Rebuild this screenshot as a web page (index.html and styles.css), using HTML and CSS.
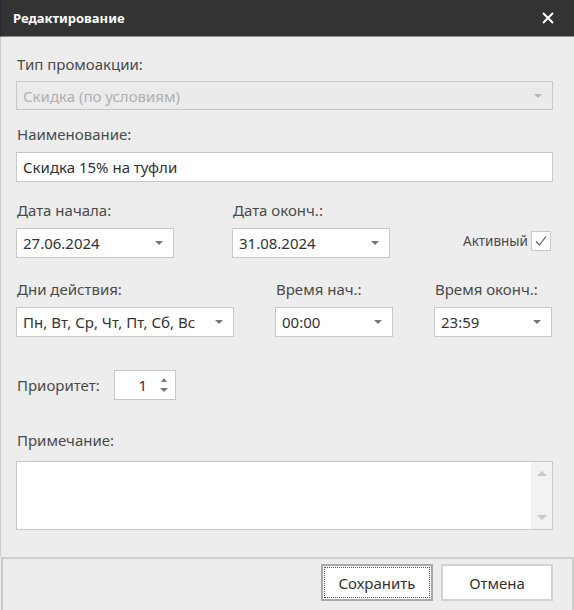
FILE: index.html
```html
<!DOCTYPE html>
<html lang="ru">
<head>
<meta charset="utf-8">
<title>Редактирование</title>
<link rel="stylesheet" href="styles.css">
</head>
<body>
<div class="window">
  <div class="titlebar">
    <span class="title">Редактирование</span>
    <svg class="close" width="12" height="12" viewBox="0 0 12 12"><path d="M1 1L11 11M11 1L1 11" stroke="#fff" stroke-width="2" fill="none"/></svg>
  </div>
  <div class="content">
    <div class="label first">Тип промоакции:</div>
    <div class="field select disabled full"><span class="val">Скидка (по условиям)</span><span class="arrow light"></span></div>

    <div class="label l2">Наименование:</div>
    <div class="field full"><span class="val">Скидка 15% на туфли</span></div>

    <div class="row r3">
      <div class="col w158">
        <div class="label">Дата начала:</div>
        <div class="field select"><span class="val">27.06.2024</span><span class="arrow"></span></div>
      </div>
      <div class="col w158">
        <div class="label">Дата оконч.:</div>
        <div class="field select"><span class="val">31.08.2024</span><span class="arrow"></span></div>
      </div>
      <div class="active">
        <span class="active-label">Активный</span>
        <span class="checkbox"><svg width="14" height="14" viewBox="0 0 14 14"><path d="M2 7.5L5.5 11L12 2.5" stroke="#555" stroke-width="1.1" fill="none"/></svg></span>
      </div>
    </div>

    <div class="row r4">
      <div class="col w218">
        <div class="label">Дни действия:</div>
        <div class="field select"><span class="val">Пн, Вт, Ср, Чт, Пт, Сб, Вс</span><span class="arrow"></span></div>
      </div>
      <div class="col w118">
        <div class="label">Время нач.:</div>
        <div class="field select"><span class="val">00:00</span><span class="arrow"></span></div>
      </div>
      <div class="col w118">
        <div class="label">Время оконч.:</div>
        <div class="field select"><span class="val">23:59</span><span class="arrow"></span></div>
      </div>
    </div>

    <div class="priority">
      <span class="plabel">Приоритет:</span>
      <div class="spin">
        <span class="num">1</span>
        <span class="spin-btns"><span class="up"></span><span class="down"></span></span>
      </div>
    </div>

    <div class="label l5">Примечание:</div>
    <div class="memo">
      <div class="memo-text"></div>
      <div class="scrollbar"><span class="sup"></span><span class="sdown"></span></div>
    </div>
  </div>
  <div class="footer">
    <button class="btn save"><span class="focus">Сохранить</span></button>
    <button class="btn cancel">Отмена</button>
  </div>
</div>
</body>
</html>
```
FILE: styles.css
```css
html, body {
  margin: 0;
  padding: 0;
  background: #ededed;
}
body {
  font-family: "Noto Sans", "Open Sans", sans-serif;
  font-size: 15px;
  color: #4a4a4a;
}
.window {
  width: 574px;
  height: 610px;
  display: flex;
  flex-direction: column;
  background: #ededed;
  overflow: hidden;
}
.titlebar {
  height: 36px;
  background: #333333;
  border-bottom: 1px solid #8a8a8a;
  border-left: 1px solid #2a2838;
  display: flex;
  align-items: center;
  padding: 0 20px 0 12px;
  flex: none;
}
.title {
  color: #fff;
  font-weight: bold;
  font-size: 13px;
  flex: 1;
}
.close {
  display: block;
}
.content {
  flex: 1;
  border-left: 1px solid #cfcfcf;
  padding: 0 21px 0 15px;
}
.label {
  line-height: 20px;
  height: 20px;
  margin-bottom: 8px;
  padding-left: 1px;
  color: #4a4a4a;
}
.label.first { margin-top: 17px; margin-bottom: 7px; }
.label.l2 { margin-top: 14px; }
.field {
  box-sizing: border-box;
  height: 30px;
  background: #fff;
  border: 1px solid #c8c8c8;
  display: flex;
  align-items: center;
  padding: 0 10px 0 6px;
  color: #333;
  position: relative;
}
.field.disabled {
  background: #ebebeb;
  color: #b0b0b0;
  height: 29px;
}
.val {
  flex: 1;
  white-space: nowrap;
}
.arrow {
  width: 0;
  height: 0;
  border-left: 4px solid transparent;
  border-right: 4px solid transparent;
  border-top: 4px solid #777;
}
.arrow.light { border-top-color: #b5b5b5; }
.row {
  display: flex;
}
.r3 { margin-top: 18px; }
.r4 { margin-top: 21px; gap: 41px; }
.w158 { width: 158px; }
.w158 + .w158 { margin-left: 58px; }
.w218 { width: 218px; }
.w118 { width: 118px; }
.active {
  margin-left: auto;
  margin-right: 2px;
  margin-top: 31px;
  display: flex;
  align-items: center;
  height: 20px;
  gap: 3px;
  font-size: 13.5px;
  color: #4a4a4a;
}
.checkbox {
  box-sizing: border-box;
  width: 20px;
  height: 20px;
  background: #fff;
  border: 1px solid #c8c8c8;
  display: flex;
  align-items: center;
  justify-content: center;
}
.priority {
  display: flex;
  align-items: center;
  margin-top: 33px;
  height: 30px;
}
.plabel {
  padding-left: 1px;
  width: 97px;
}
.spin {
  box-sizing: border-box;
  width: 62px;
  height: 30px;
  background: #fff;
  border: 1px solid #c8c8c8;
  display: flex;
  align-items: center;
  color: #333;
}
.num {
  flex: 1;
  text-align: right;
  padding-right: 8px;
}
.spin-btns {
  width: 18px;
  display: flex;
  flex-direction: column;
  align-items: center;
  gap: 6px;
  margin-right: 2px;
}
.up {
  width: 0; height: 0;
  border-left: 3px solid transparent;
  border-right: 3px solid transparent;
  border-bottom: 4px solid #777;
}
.down {
  width: 0; height: 0;
  border-left: 4px solid transparent;
  border-right: 4px solid transparent;
  border-top: 4px solid #777;
}
.label.l5 { margin-top: 30px; margin-bottom: 11px; }
.memo {
  box-sizing: border-box;
  height: 69px;
  background: #fff;
  border: 1px solid #c8c8c8;
  display: flex;
}
.memo-text { flex: 1; }
.scrollbar {
  width: 21px;
  background: #f2f2f2;
  display: flex;
  flex-direction: column;
  align-items: center;
  justify-content: space-between;
  padding: 9px 0 9px;
}
.sup {
  width: 0; height: 0;
  border-left: 5px solid transparent;
  border-right: 5px solid transparent;
  border-bottom: 5px solid #c8c8c8;
}
.sdown {
  width: 0; height: 0;
  border-left: 5px solid transparent;
  border-right: 5px solid transparent;
  border-top: 5px solid #c8c8c8;
}
.footer {
  flex: none;
  height: 46px;
  border-top: 2px solid #cdcdcd;
  border-left: 2px solid #c8c8c8;
  border-right: 2px solid #cdcdcd;
  margin-left: 1px;
  display: flex;
  justify-content: flex-end;
  align-items: flex-start;
  gap: 8px;
  padding: 5px 19px 0 0;
}
.btn {
  font-family: "Noto Sans", "Open Sans", sans-serif;
  font-size: 15px;
  color: #333;
  background: #fff;
  box-sizing: border-box;
  width: 112px;
  height: 37px;
  margin: 0;
  padding: 0;
  display: flex;
  align-items: center;
  justify-content: center;
}
.cancel {
  border: 2px solid #d2d2d2;
}
.save {
  border: 2px solid #a9a9a9;
  padding: 1px;
}
.focus {
  box-sizing: border-box;
  width: 100%;
  height: 100%;
  border: 1px dotted #555;
  display: flex;
  align-items: center;
  justify-content: center;
}
```
